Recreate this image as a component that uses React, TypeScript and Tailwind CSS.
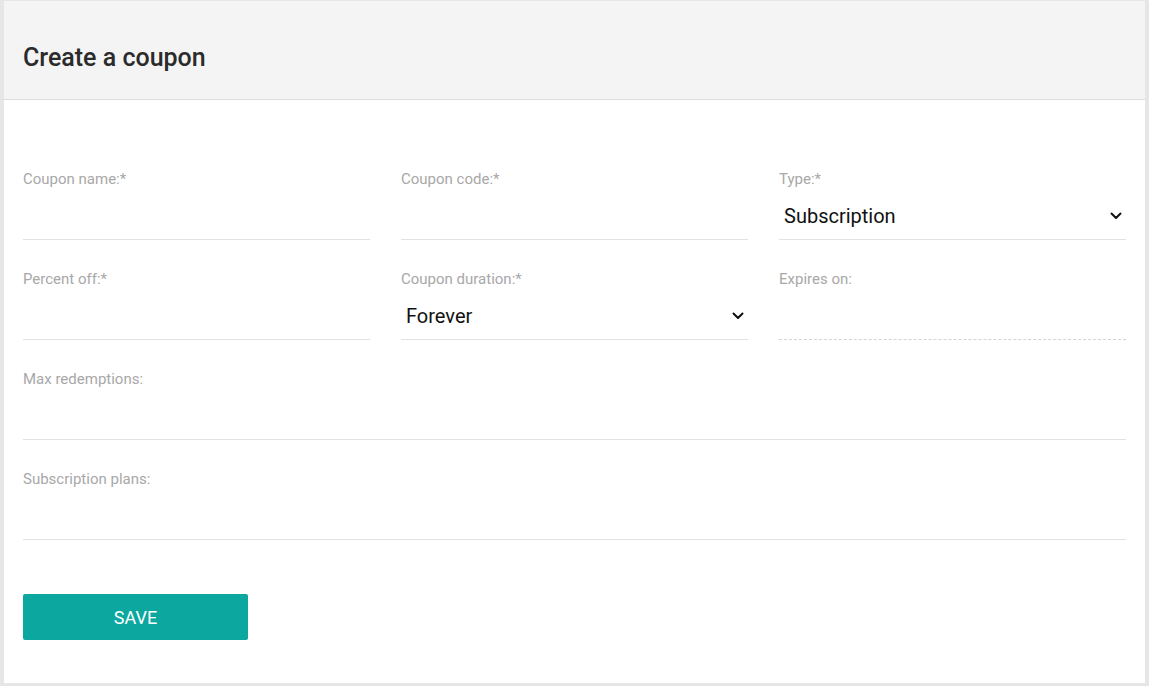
import React from "react";

function Chevron() {
  return (
    <svg width="12" height="8" viewBox="0 0 12 8" fill="none" className="shrink-0">
      <path d="M1.5 1.5 L6 6 L10.5 1.5" stroke="#111" strokeWidth="2" strokeLinecap="round" strokeLinejoin="round" />
    </svg>
  );
}

type FieldProps = {
  label: string;
  value?: string;
  select?: boolean;
  dashed?: boolean;
  className?: string;
};

function Field({ label, value, select, dashed, className = "" }: FieldProps) {
  return (
    <div className={`pt-[30px] ${className}`}>
      <div className="h-[18px] text-[15px] leading-[18px] text-[#a8a8a8]">{label}</div>
      <div
        className={`flex h-[52px] items-center justify-between pl-[5px] pr-[4px] pt-[4px] ${
          dashed ? "border-b border-dashed border-[#d4d4d4]" : "border-b border-[#e2e2e2]"
        }`}
      >
        <span className="text-[20px] text-[#111]">{value}</span>
        {select && <Chevron />}
      </div>
    </div>
  );
}

export default function App() {
  return (
    <div
      className="min-h-[686px] bg-[#e6e6e6] px-[4px] pb-[3px] pt-[1px]"
      style={{ fontFamily: "Roboto, 'Liberation Sans', Arial, sans-serif" }}
    >
      <div className="bg-white">
        <div className="flex h-[99px] items-center border-b border-[#dcdcdc] bg-[#f4f4f4] px-[19px] pt-[16px]">
          <h1 className="text-[25px] font-medium text-[#2b2b2b]">Create a coupon</h1>
        </div>

        <div className="px-[19px] pb-[43px] pt-[40px]">
          <div className="grid grid-cols-3 gap-x-[31px]">
            <Field label="Coupon name:*" />
            <Field label="Coupon code:*" />
            <Field label="Type:*" value="Subscription" select />
            <Field label="Percent off:*" />
            <Field label="Coupon duration:*" value="Forever" select />
            <Field label="Expires on:" dashed />
            <Field label="Max redemptions:" className="col-span-3" />
            <Field label="Subscription plans:" className="col-span-3" />
          </div>

          <button className="mt-[54px] flex h-[46px] w-[225px] items-center justify-center rounded-[2px] bg-[#0ca89f] text-[18px] text-white">
            SAVE
          </button>
        </div>
      </div>
    </div>
  );
}
